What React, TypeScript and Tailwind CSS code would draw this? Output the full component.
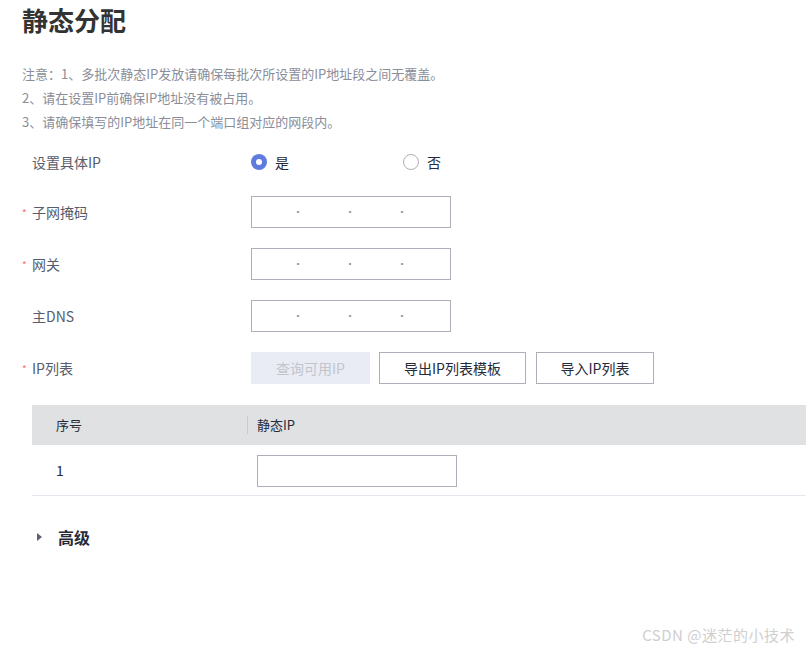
import React from "react";

const FONT = { fontFamily: '"Noto Sans CJK SC", "Noto Sans", sans-serif' };

function IpInput() {
  return (
    <div className="flex h-8 w-[200px] items-center border border-[#adb0b8] bg-white">
      <span className="w-[40px]" />
      <span className="w-[12px] text-center text-[10px] leading-none text-[#8a8e99]">·</span>
      <span className="w-[40px]" />
      <span className="w-[12px] text-center text-[10px] leading-none text-[#8a8e99]">·</span>
      <span className="w-[40px]" />
      <span className="w-[12px] text-center text-[10px] leading-none text-[#8a8e99]">·</span>
      <span className="w-[40px]" />
    </div>
  );
}

function FormRow({
  label,
  required,
  children,
}: {
  label: string;
  required?: boolean;
  children: React.ReactNode;
}) {
  return (
    <div className="flex h-8 items-center">
      <span className="w-[10px] text-[10px] text-[#f66f6a]">{required ? "*" : ""}</span>
      <span className="w-[219px] text-[14px] text-[#575d6c]">{label}</span>
      {children}
    </div>
  );
}

export default function App() {
  return (
    <div className="relative h-[651px] w-[806px] overflow-hidden bg-white pl-[22px]" style={FONT}>
      <h1 className="pt-[3px] text-[26px] font-bold leading-[34px] text-[#333]">静态分配</h1>

      <div className="mt-[25px] text-[13px] leading-[24px] text-[#8a8e99]">
        <p>注意：1、多批次静态IP发放请确保每批次所设置的IP地址段之间无覆盖。</p>
        <p>2、请在设置IP前确保IP地址没有被占用。</p>
        <p>3、请确保填写的IP地址在同一个端口组对应的网段内。</p>
      </div>

      <div className="mt-[10px] flex flex-col gap-5">
        <div className="pt-[2px]">
          <FormRow label="设置具体IP">
            <label className="flex w-[152px] items-center gap-2">
              <span className="flex h-4 w-4 items-center justify-center rounded-full bg-[#5e7ce0]">
                <span className="h-[6px] w-[6px] rounded-full bg-white" />
              </span>
              <span className="text-[14px] text-[#252b3a]">是</span>
            </label>
            <label className="flex items-center gap-2">
              <span className="h-4 w-4 rounded-full border border-[#adb0b8] bg-white" />
              <span className="text-[14px] text-[#252b3a]">否</span>
            </label>
          </FormRow>
        </div>
        <div className="-mt-[2px]">
          <FormRow label="子网掩码" required>
            <IpInput />
          </FormRow>
        </div>
        <FormRow label="网关" required>
          <IpInput />
        </FormRow>
        <FormRow label="主DNS">
          <IpInput />
        </FormRow>
        <FormRow label="IP列表" required>
          <div className="flex gap-[9px]">
            <button className="h-8 w-[119px] bg-[#e9ecf4] text-[14px] text-[#c2c5cc]">查询可用IP</button>
            <button className="h-8 w-[147px] border border-[#adb0b8] text-[14px] text-[#252b3a]">导出IP列表模板</button>
            <button className="ml-px h-8 w-[118px] border border-[#adb0b8] text-[14px] text-[#252b3a]">导入IP列表</button>
          </div>
        </FormRow>
      </div>

      <div className="ml-[10px] mt-[21px]">
        <div className="flex h-10 items-center bg-[#dfe1e3] text-[13px] text-[#252b3a]">
          <span className="w-[215px] pl-6">序号</span>
          <span className="h-[18px] w-px bg-[#c8cbd0]" />
          <span className="pl-[9px]">静态IP</span>
        </div>
        <div className="flex h-[51px] items-center border-b border-[#e4e7ee] text-[14px] text-[#252b3a]">
          <span className="w-[225px] pl-6">1</span>
          <div className="mt-[2px] h-8 w-[200px] border border-[#adb0b8]" />
        </div>
      </div>

      <div className="ml-[15px] mt-[29px] flex items-center">
        <svg width="6" height="10" viewBox="0 0 6 10" className="mr-[15px]">
          <path d="M0 1 L5 5 L0 9 Z" fill="#5c6170" />
        </svg>
        <span className="text-[16px] font-bold text-[#252b3a]">高级</span>
      </div>

      <div className="absolute bottom-[5px] right-[11px] text-[15px] tracking-[0.5px] text-[#cfcfcf]">
        CSDN @迷茫的小技术
      </div>
    </div>
  );
}
